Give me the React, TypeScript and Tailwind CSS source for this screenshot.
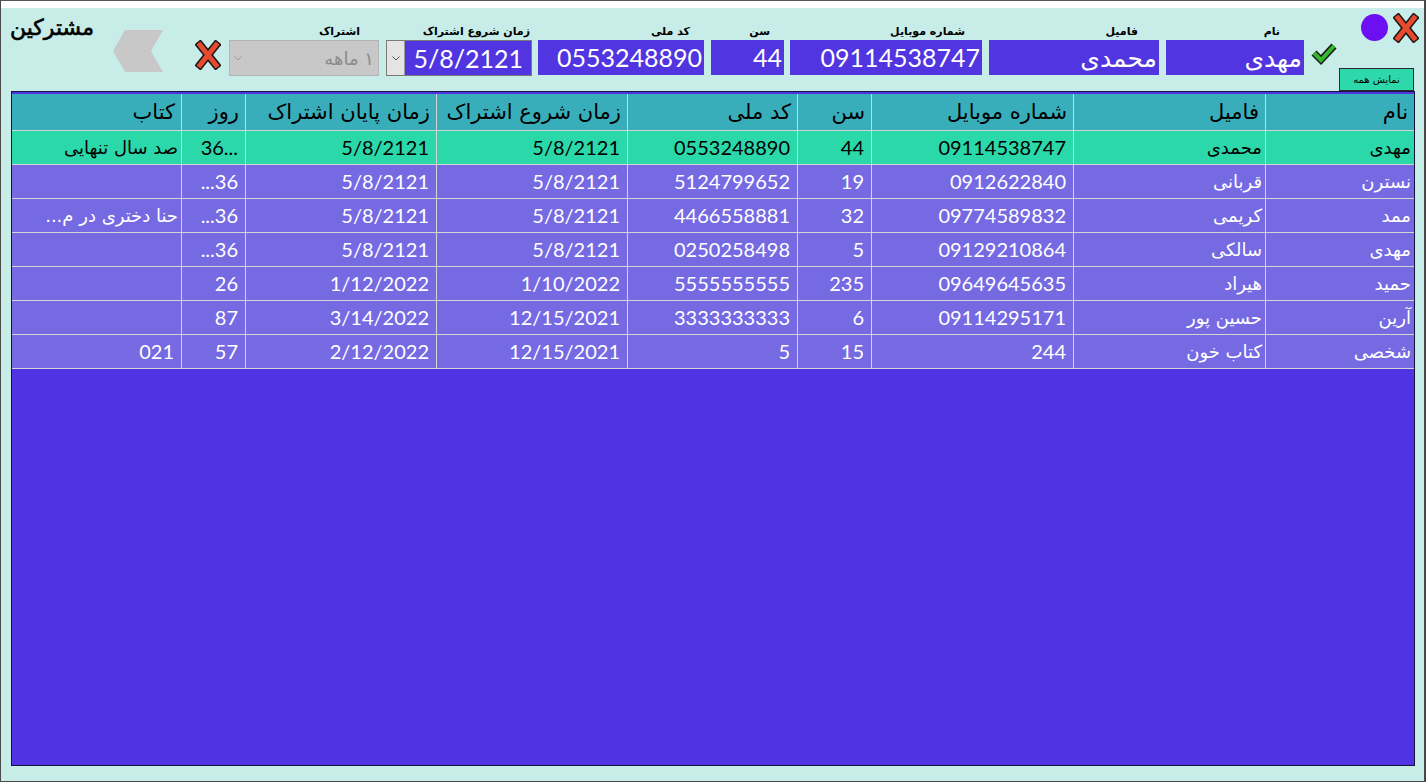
import React from "react";

const FONT = "font-['Lato','DejaVu_Sans',sans-serif]";

function RedX({ w = 26, h = 30 }: { w?: number; h?: number }) {
  return (
    <svg width={w} height={h} viewBox="0 0 26 30">
      <g strokeLinecap="square">
        <line x1="5" y1="5" x2="21" y2="25" stroke="#1a1a1a" strokeWidth="8" />
        <line x1="21" y1="5" x2="5" y2="25" stroke="#1a1a1a" strokeWidth="8" />
        <line x1="5" y1="5" x2="21" y2="25" stroke="#e84a2e" strokeWidth="5" />
        <line x1="21" y1="5" x2="5" y2="25" stroke="#e84a2e" strokeWidth="5" />
      </g>
    </svg>
  );
}

function Check() {
  return (
    <svg width="28" height="24" viewBox="0 0 28 24">
      <polyline points="4,12 11,19 24,5" fill="none" stroke="#1a1a1a" strokeWidth="7" strokeLinejoin="miter" />
      <polyline points="4,12 11,19 24,5" fill="none" stroke="#33b82c" strokeWidth="4" strokeLinejoin="miter" />
    </svg>
  );
}

function Chevron() {
  return (
    <svg width="50" height="42" viewBox="0 0 50 42">
      <polygon points="0,21 12,0 50,0 38,21 50,42 12,42" fill="#c8c8c8" />
    </svg>
  );
}

function SmallDown({ color = "#888" }: { color?: string }) {
  return (
    <svg width="8" height="5" viewBox="0 0 8 5">
      <polyline points="0.5,0.5 4,4 7.5,0.5" fill="none" stroke={color} strokeWidth="1" />
    </svg>
  );
}

type Field = { label: string; value: string; w: string; ml: string; lpr: string };

const fields: Field[] = [
  { label: "کد ملی", value: "0553248890", w: "w-[166px]", ml: "ml-[6px]", lpr: "pr-[14px]" },
  { label: "سن", value: "44", w: "w-[73px]", ml: "ml-[7px]", lpr: "pr-[14px]" },
  { label: "شماره موبایل", value: "09114538747", w: "w-[192px]", ml: "ml-[6px]", lpr: "pr-[17px]" },
  { label: "فامیل", value: "محمدی", w: "w-[170px]", ml: "ml-[7px]", lpr: "pr-[21px]" },
  { label: "نام", value: "مهدی", w: "w-[138px]", ml: "ml-[7px]", lpr: "pr-[24px]" },
];

const cols = [
  { title: "نام", w: "w-[149px]" },
  { title: "فامیل", w: "w-[192px]" },
  { title: "شماره موبایل", w: "w-[202px]" },
  { title: "سن", w: "w-[74px]" },
  { title: "کد ملی", w: "w-[170px]" },
  { title: "زمان شروع اشتراک", w: "w-[191px]" },
  { title: "زمان پایان اشتراک", w: "w-[191px]" },
  { title: "روز", w: "w-[64px]" },
  { title: "کتاب", w: "w-[169px]" },
];

const rows: string[][] = [
  ["مهدی", "محمدی", "09114538747", "44", "0553248890", "5/8/2121", "5/8/2121", "36...", "صد سال تنهایی"],
  ["نسترن", "قربانی", "0912622840", "19", "5124799652", "5/8/2121", "5/8/2121", "...36", ""],
  ["ممد", "کریمی", "09774589832", "32", "4466558881", "5/8/2121", "5/8/2121", "...36", "حنا دختری در م..."],
  ["مهدی", "سالکی", "09129210864", "5", "0250258498", "5/8/2121", "5/8/2121", "...36", ""],
  ["حمید", "هیراد", "09649645635", "235", "5555555555", "1/10/2022", "1/12/2022", "26", ""],
  ["آرین", "حسین پور", "09114295171", "6", "3333333333", "12/15/2021", "3/14/2022", "87", ""],
  ["شخصی", "کتاب خون", "244", "15", "5", "12/15/2021", "2/12/2022", "57", "021"],
];

const isNum = (s: string) => /^[0-9./]+$/.test(s);

export default function App() {
  return (
    <div className={`w-[1426px] h-[782px] bg-[#c8ede9] border-l border-r-2 border-b border-[#4a4a4a] flex flex-col overflow-hidden ${FONT}`}>
      <div className="h-px bg-[#555555] shrink-0" />
      <div className="h-[7px] bg-white shrink-0" />

      {/* top form */}
      <div className="h-[83px] shrink-0 flex flex-row items-start">
        <div className="ml-[3px] mt-[3px] w-[90px] shrink-0 text-right text-[22px] [-webkit-text-stroke:0.6px_black] leading-[34px] text-black whitespace-nowrap font-['DejaVu_Sans',sans-serif]" dir="rtl">
          مشترکین
        </div>
        <div className="ml-[19px] mt-[22px] w-[50px] h-[42px] shrink-0">
          <Chevron />
        </div>
        <div className="ml-[32px] mt-[32px] shrink-0">
          <RedX />
        </div>

        {/* select */}
        <div className="ml-[8px] mt-[16px] w-[150px] shrink-0 flex flex-col">
          <div className="h-[16px] text-[11px] font-bold leading-[16px] text-black text-right pr-[19px] font-['DejaVu_Sans',sans-serif]" dir="rtl">
            اشتراک
          </div>
          <div className="h-[36px] bg-[#c8c8c8] border border-[#b4b4b4] flex flex-row items-center justify-between px-[4px]">
            <SmallDown color="#9a9a9a" />
            <span className="text-[18px] text-[#8c8c8c] font-['DejaVu_Sans',sans-serif]" dir="rtl">۱ ماهه</span>
          </div>
        </div>

        {/* date */}
        <div className="ml-[7px] mt-[16px] w-[146px] shrink-0 flex flex-col">
          <div className="h-[16px] text-[11px] font-bold leading-[16px] text-black text-right pr-[2px] whitespace-nowrap font-['DejaVu_Sans',sans-serif]" dir="rtl">
            زمان شروع اشتراک
          </div>
          <div className="h-[36px] border border-[#7a7a7a] flex flex-row">
            <div className="w-[18px] bg-[#e4e4e4] border-r border-[#9a9a9a] flex items-center justify-center">
              <SmallDown color="#555" />
            </div>
            <div className="flex-1 bg-[#5035e0] text-white text-[25px] leading-[34px] text-right pr-[8px]">5/8/2121</div>
          </div>
        </div>

        {fields.map((f) => (
          <div key={f.label} className={`${f.ml} mt-[16px] ${f.w} shrink-0 flex flex-col`}>
            <div className={`h-[16px] text-[11px] font-bold leading-[16px] text-black text-right ${f.lpr} whitespace-nowrap font-['DejaVu_Sans',sans-serif]`} dir="rtl">
              {f.label}
            </div>
            <div className="h-[35px] bg-[#5035e0] text-white text-[25px] leading-[35px] text-right pr-[2px] whitespace-nowrap overflow-hidden" dir="rtl">
              {f.value}
            </div>
          </div>
        ))}

        <div className="ml-[6px] mt-[33px] shrink-0">
          <Check />
        </div>

        <div className="ml-[1px] w-[82px] shrink-0 flex flex-col">
          <div className="flex flex-row items-start mt-[5px]">
            <div className="ml-[22px] mt-[1px] w-[27px] h-[27px] shrink-0 rounded-full bg-[#6c10f2]" />
            <div className="ml-[5px] shrink-0">
              <RedX />
            </div>
          </div>
          <div className="mt-[25px] w-[75px] h-[23px] bg-[#2dd8ab] border border-[#2a2a2a] text-[10px] text-black flex items-center justify-center font-['DejaVu_Sans',sans-serif]" dir="rtl">
            نمایش همه
          </div>
        </div>
      </div>

      {/* table */}
      <div className="ml-[10px] w-[1404px] h-[675px] shrink-0 border border-[#14143a] bg-[#5034e3] pt-[2px]" dir="rtl">
        <div className="flex flex-row h-[37px] bg-[#39aebb] border-b border-[#d4d4d4]">
          {cols.map((c, i) => (
            <div
              key={c.title}
              className={`${c.w} shrink-0 h-full ${i < cols.length - 1 ? "border-l border-[#d4d4d4]" : ""} text-right pr-[6px] text-[21px] leading-[36px] text-black whitespace-nowrap overflow-hidden font-['DejaVu_Sans',sans-serif]`}
            >
              {c.title}
            </div>
          ))}
        </div>
        {rows.map((r, ri) => (
          <div
            key={ri}
            className={`flex flex-row h-[34px] border-b border-[#d4d4d4] ${ri === 0 ? "bg-[#2ad8aa] text-black" : "bg-[#766ae3] text-white"}`}
          >
            {r.map((v, ci) => (
              <div
                key={ci}
                className={`${cols[ci].w} shrink-0 h-full ${ci < cols.length - 1 ? "border-l border-[#d4d4d4]" : ""} text-right ${isNum(v) || v.includes("...") && /[0-9]/.test(v) ? "pr-[7px] text-[20px]" : "pr-[3px] text-[18px] font-['DejaVu_Sans',sans-serif]"} leading-[33px] whitespace-nowrap overflow-hidden`}
              >
                {/^[0-9.]+$/.test(v) && v.includes("...") ? <span dir="ltr">{v}</span> : v}
              </div>
            ))}
          </div>
        ))}
      </div>
    </div>
  );
}
